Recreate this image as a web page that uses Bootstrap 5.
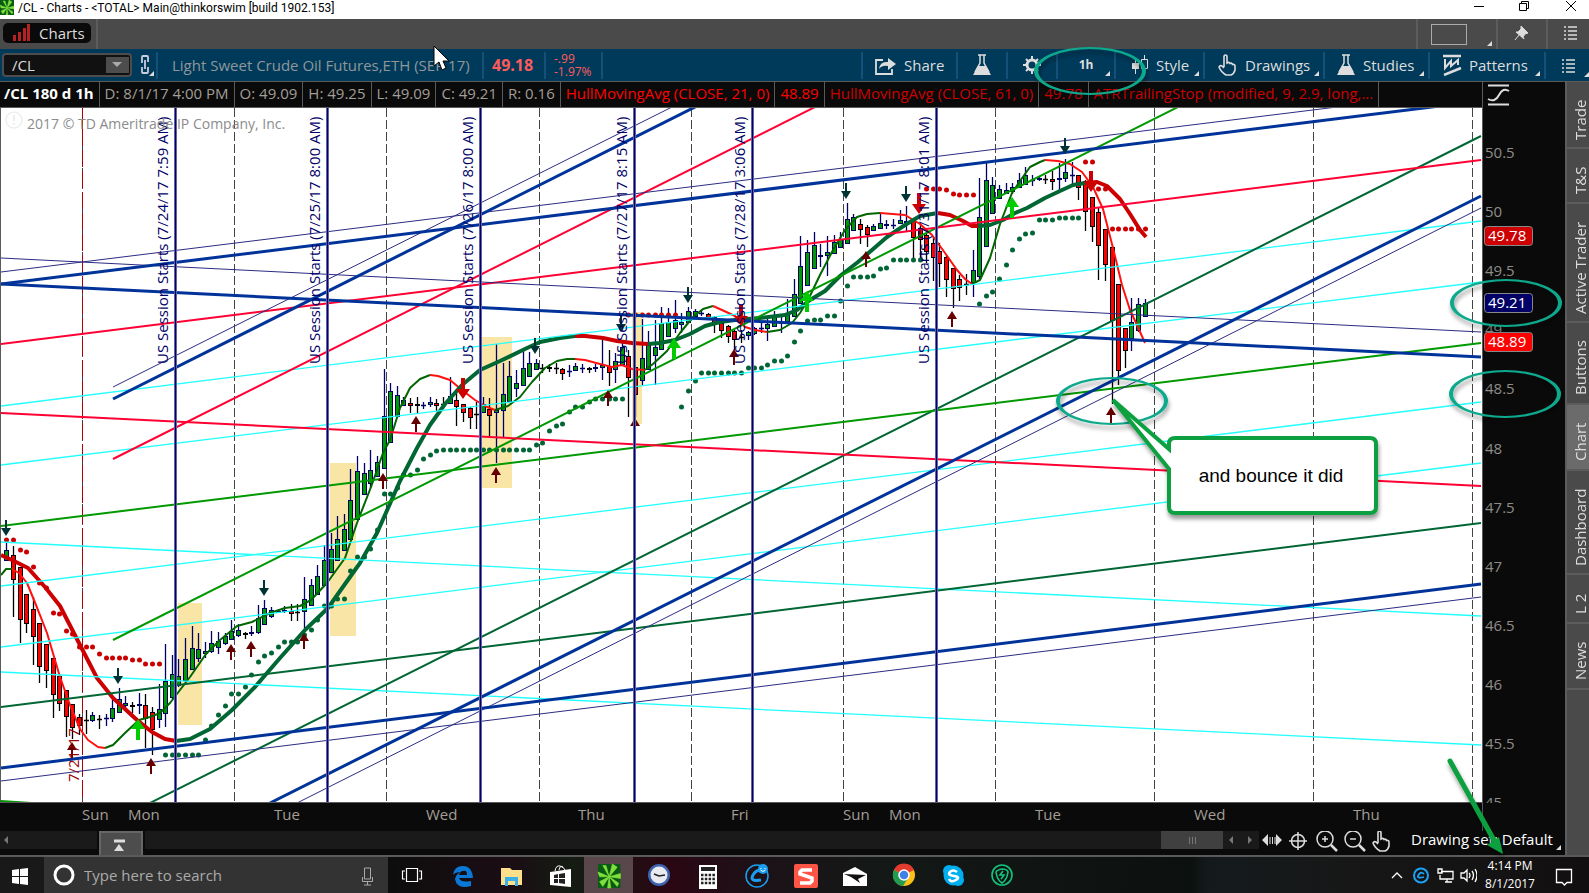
<!DOCTYPE html>
<html lang="en">
<head>
<meta charset="utf-8">
<title>/CL - Charts</title>
<meta name="viewport" content="width=device-width, initial-scale=1">
<link href="https://cdn.jsdelivr.net/npm/bootstrap@5.3.0/dist/css/bootstrap.min.css" rel="stylesheet">
<style>
body{font-family:"Open Sans","Noto Sans",sans-serif;font-size:15px;line-height:20px;background:#0a0a0a;color:#ddd;overflow:hidden}
button,input{font:inherit;color:inherit;background:none;border:0;padding:0}
svg{display:block;flex:none}
.titlebar{height:19px;background:#fff;color:#000;font-family:Roboto,sans-serif;font-size:12px;line-height:16px}
.tabstrip{height:30px;background:#4a4a4a}
.tabstrip .cell{border-left:2px solid #5c5c5c;height:30px}
.charttab{background:#0a0a0a;border-radius:5px;width:88px;height:20px;margin:4px 5px 6px 3px}
.toolbar{height:33px;background:#003a5a;border-bottom:1px solid #5a5a5a}
.toolbar .cell{border-left:2px solid #14507a;height:27px}
.cell{position:relative;white-space:nowrap;flex:none}
.corner::after{content:"";position:absolute;right:4px;bottom:3px;border-style:solid;border-width:0 0 5px 5px;border-color:transparent transparent #ddd}
.combo{width:130px;height:24px;border:2px solid #4d4d4d;border-radius:4px;background:#111;margin-left:2px}
.combo input{width:90px;height:20px}
.combo button{width:23px;height:16px;background:#4d4d4d;margin-right:1px}
.muted{color:#8f979b}
.drop{color:#ff5a5a}
.w45{width:45px}.w50{width:50px}.w58{width:58px}.w89{width:89px}.w95{width:95px}.w105{width:105px}.w116{width:116px}.w120{width:120px}
.infobar{height:26px;border-bottom:1px solid #5a5a5a;color:#a39e97}
.infobar span{border-right:1px solid #5a5a5a;padding:0 5px;height:25px;line-height:22px;white-space:nowrap}
.infobar span:first-child{padding-left:4px}
.bright{color:#f00}.deep{color:#c00}
.plot{background:#fff;border-left:1px solid #5a5a5a;border-bottom:1px solid #5a5a5a}
.timeaxis{height:28px}
.priceaxis{width:83px;border-left:1px solid #5a5a5a}
.sidetabs{width:24px;background:#4a4a4a;border-left:2px solid #5c5c5c;padding-top:1px}
.sidetabs button{writing-mode:vertical-rl;transform:rotate(180deg);border-top:2px solid #5c5c5c;width:22px;display:flex;align-items:center;justify-content:center;line-height:18px;color:#ddd;padding:0 4px 10px 0}
.h49{height:49px}.h56{height:55px}.h66{height:66px}.h82{height:82px}.h104{height:104px}.h118{height:119px}
.sidetabs .current{background:#6b6b6b}
.bottomrow{height:24px}
.track{background:#1a1a1a;height:18px}
.risebtn{width:44px;height:24px;background:#4d4d4d;border:2px solid #666;border-bottom:0;margin:0 2px}
.thumb{width:62px;background:#404040;height:18px}
.taskbar{height:38px;border-top:2px solid #5a5a5a;background:linear-gradient(90deg,#0d0d0d 24%,#1b0d14 32%,#141c12 36%,#2a0613 42%,#1c1217 48%,#141817 55%,#0c100f 75%,#141a1c 76%,#171717 85%,#120f10 100%);color:#fff}
.startbtn{width:44px;background:#191919}
.searchbox{width:344px;background:#333}
.searchbox input{width:262px}
.searchbox input::placeholder{color:#aaa;opacity:1}
.task{width:49px;height:36px}
.task.active{background:#5a474c}
.clock{font-size:12px;line-height:18px;width:66px}
.overlay{position:absolute;left:0;top:0;width:100%;height:100%;pointer-events:none}
svg text{font-family:"Open Sans","Noto Sans",sans-serif}
svg .notetext{font-family:"Liberation Sans",Arial,sans-serif}
</style>
</head>
<body class="vh-100 d-flex flex-column position-relative">
<svg width="0" height="0" class="position-absolute"><defs>
<g id="leaf"><rect width="14" height="15" fill="#0b5a14"/><path d="M7 8L3 1L5 1zM7 8L9 0L12 2zM7 8L0 5L1 8zM7 8L14 6L14 9zM7 8L1 11L3 14zM7 8L12 14L13 12zM7 8L6 15L8 15z" fill="#7fe03c" stroke="#7fe03c" stroke-width=".4"/></g>
<g id="flask"><path d="M5 1H13M7 1V9L2 18M11 1V9L16 18" fill="none" stroke="#ddd" stroke-width="1.5"/><path d="M5 12H13L18 21H0z" fill="#ddd"/></g>
<g id="hand"><path d="M6 13V3Q6 1 7.500 1T9 3V9Q11 7.500 12 9.500Q14 8.500 14.500 10.500Q17 10 17 12V16Q16 20 13 21H8Q3 18 1 13Q2 11 4 12L6 14" fill="none" stroke="#ddd" stroke-width="1.600"/></g>
<g id="list"><path d="M0 1H2M4 1H13M0 5H2M4 5H13M0 9H2M4 9H13M0 13H2M4 13H13" stroke="#ddd" stroke-width="1.600"/></g>
</defs></svg>

<header class="titlebar d-flex align-items-start flex-none">
 <svg width="14" height="15"><use href="#leaf"/></svg><span class="ps-1 flex-grow-1">/CL - Charts - &lt;TOTAL&gt; Main@thinkorswim [build 1902.153]</span>
 <button aria-label="Minimize"><svg width="46" height="14"><path d="M18 6.500H28" stroke="#000"/></svg></button>
 <button aria-label="Restore"><svg width="46" height="14"><path d="M17.500 3.500H24.500V10.500H17.500zM19.500 3V1.500H26.500V8.500H25" fill="none" stroke="#000"/></svg></button>
 <button aria-label="Close"><svg width="41" height="14"><path d="M18 1L28 11M28 1L18 11" stroke="#000"/></svg></button>
</header>

<nav class="tabstrip d-flex">
 <button class="charttab d-flex align-items-center"><svg width="36" height="20"><path d="M11.500 18V12M16.500 18V9M21.500 18V5M25.500 18V1" stroke="#b52222" stroke-width="3"/></svg><span>Charts</span></button>
 <div class="cell flex-grow-1"></div>
 <button class="cell corner" style="width:80px" aria-label="Layout"><svg width="60" height="26"><rect x="13.500" y="3.500" width="35" height="20" fill="none" stroke="#aaa"/></svg></button>
 <button class="cell w50" aria-label="Pin"><svg width="46" height="26"><path d="M23 5L30 12L27 13L25 16L26 18L18 11L20 11L23 8zM21 14L17 19" fill="#ddd" stroke="#ddd"/></svg></button>
 <button class="cell" style="width:43px" aria-label="Menu"><svg width="39" height="28"><use href="#list" x="16" y="6"/></svg></button>
</nav>

<nav class="toolbar d-flex align-items-center">
 <div class="combo d-flex align-items-center justify-content-between"><label class="visually-hidden" for="sym">Symbol</label><input id="sym" class="ps-2" value="/CL"><button aria-label="Choose symbol"><svg width="23" height="16"><path d="M6 5H16L11 10z" fill="#aaa"/></svg></button></div>
 <button aria-label="Link" style="width:24px"><svg width="24" height="24"><path d="M10 10V4Q10 3 11 3H15Q16 3 16 4V9M10 14V19Q10 20 11 20H15Q16 20 16 19V14M13 7V16" fill="none" stroke="#ccd" stroke-width="1.800"/><path d="M17 23H22V18z" fill="#ddd"/></svg></button>
 <div class="cell d-flex align-items-center muted" style="width:326px;padding-left:14px">Light Sweet Crude Oil Futures,ETH (SEP 17)</div>
 <div class="cell d-flex align-items-center drop fw-bold ps-2 fs-6" style="width:62px">49.18</div>
 <div class="cell drop ps-2" style="width:57px;font-size:12px;line-height:13px">-.99<br>-1.97%</div>
 <div class="cell flex-grow-1"></div>
 <button class="cell w95 d-flex align-items-center"><svg class="ms-2" width="33" height="22"><path d="M12 6H5V20H21V15" fill="none" stroke="#ddd" stroke-width="1.800"/><path d="M8 15Q9 7 17 8V4L25 10L17 16V12Q11 11 8 15" fill="#ddd"/></svg>Share</button>
 <button class="cell w50 d-flex justify-content-center align-items-center" aria-label="Lab"><svg width="18" height="22"><use href="#flask"/></svg></button>
 <button class="cell w50 d-flex justify-content-center align-items-center" aria-label="Settings"><svg width="20" height="20"><circle cx="10" cy="10" r="5" fill="none" stroke="#ddd" stroke-width="3"/><path d="M10 1V5M10 15V19M1 10H5M15 10H19M4 4L6 6M14 14L16 16M16 4L14 6M6 14L4 16" stroke="#ddd" stroke-width="2"/></svg></button>
 <button class="cell corner w58 fw-bold" style="font-size:12px">1h</button>
 <button class="cell corner w89 d-flex align-items-center"><svg class="ms-3" width="24" height="22"><path d="M3.500 4V20M12.500 1V18" stroke="#ddd"/><path d="M0 9H7V15H0z" fill="#ddd"/><path d="M9.500 5.500H15.500V14.500H9.500z" fill="#003a5a" stroke="#ddd"/></svg>Style</button>
 <button class="cell corner w120 d-flex align-items-center"><svg class="ms-2 ps-1" width="32" height="22"><use href="#hand" x="1"/></svg>Drawings</button>
 <button class="cell corner w105 d-flex align-items-center"><svg class="ms-2 ps-1" width="30" height="22"><use href="#flask"/></svg>Studies</button>
 <button class="cell corner w116 d-flex align-items-center"><svg class="ms-2 ps-1" width="31" height="22"><path d="M1 2H19M2 21L19 14" stroke="#ddd" stroke-width="2.500"/><path d="M3 5V14L9 7V12L16 6V11" fill="none" stroke="#ddd" stroke-width="2"/></svg>Patterns</button>
 <button class="cell w45" aria-label="Menu"><svg width="43" height="27"><use href="#list" x="16" y="7"/><path d="M38 25H43V20z" fill="#ddd"/></svg></button>
</nav>

<main class="d-flex flex-grow-1" style="min-height:0">
 <section class="d-flex flex-column flex-grow-1" style="min-width:0">
  <div class="d-flex flex-grow-1" style="min-height:0">
   <div class="d-flex flex-column flex-grow-1" style="min-width:0">
    <div class="infobar d-flex"><span class="text-white fw-bold">/CL 180 d 1h</span><span>D: 8/1/17 4:00 PM</span><span>O: 49.09</span><span>H: 49.25</span><span>L: 49.09</span><span>C: 49.21</span><span>R: 0.16</span><span class="bright">HullMovingAvg (CLOSE, 21, 0)</span><span class="bright">48.89</span><span class="deep">HullMovingAvg (CLOSE, 61, 0)</span><span class="deep">49.78</span><span class="deep">ATRTrailingStop (modified, 9, 2.9, long,...</span></div>
    <div class="plot flex-grow-1" style="min-height:0"><svg width="100%" height="100%"><g id="chart" transform="translate(-1,-108)"></g></svg></div>
    <div class="timeaxis"><svg id="times" width="100%" height="28" fill="#a39e97"></svg></div>
   </div>
   <div class="priceaxis"><svg width="100%" height="721"><g id="prices" transform="translate(-1482,-82)"></g></svg></div>
  </div>
  <div class="bottomrow d-flex">
   <div class="track" style="width:97px"><svg width="20" height="18"><path d="M8 5V13L4 9z" fill="#777"/></svg></div>
   <button class="risebtn" aria-label="Expand"><svg width="40" height="22"><path d="M13 8H24" stroke="#ddd" stroke-width="3"/><path d="M18 11L23 18H13z" fill="#ddd"/></svg></button>
   <div class="track flex-grow-1 d-flex justify-content-end"><div class="thumb"><svg width="62" height="18"><path d="M28.500 6V13M31.500 6V13M34.500 6V13" stroke="#777"/></svg></div><svg width="36" height="18"><path d="M10 5V13L6 9zM25 5V13L29 9z" fill="#777"/></svg></div>
   <svg width="148" height="24"><g fill="none" stroke="#ddd" stroke-width="1.500"><path d="M11 6V13M13.500 6V13M16 6V13" stroke-width="1"/><path d="M9 3V15L3 9zM17 3V15L23 9z" fill="#ddd" stroke="none"/><circle cx="39" cy="10" r="6.500"/><path d="M39 1V19M30 10H48"/><circle cx="66" cy="8" r="8"/><path d="M63 8H69M66 5V11"/><circle cx="94" cy="8" r="8"/><path d="M91 8H97"/><path d="M72 14L78 20M100 14L106 20" stroke-width="2.500"/></g><use href="#hand" x="113" y="-1"/></svg>
   <button class="cell corner d-flex align-items-start text-white" style="width:158px;height:22px;line-height:16px"><span class="ps-1">Drawing set: Default</span></button>
  </div>
 </section>
 <nav class="sidetabs d-flex flex-column"><button class="h66">Trade</button><button class="h56">T&amp;S</button><button class="h118">Active Trader</button><button class="h82">Buttons</button><button class="h66 current">Chart</button><button class="h104">Dashboard</button><button class="h49">L 2</button><button class="h66">News</button></nav>
</main>

<footer class="taskbar d-flex align-items-stretch">
 <button class="startbtn" aria-label="Start"><svg width="44" height="36"><path d="M12 13L19 12V19H12zM20 12L28 11V19H20zM12 20H19V27L12 26zM20 20H28V28L20 27z" fill="#fff"/></svg></button>
 <div class="searchbox d-flex align-items-center justify-content-between"><svg width="38" height="36"><circle cx="20" cy="18" r="9" fill="none" stroke="#fff" stroke-width="3"/></svg><input aria-label="Search" placeholder="Type here to search"><svg width="40" height="36"><path d="M16.500 11H22.500V22H16.500zM14.500 20V24.500H24.500V20M19.500 25V28M16 28H23" fill="none" stroke="#aaa"/></svg></div>
 <button class="task" aria-label="Task view"><svg width="49" height="36"><path d="M18.500 11.500H29.500V24.500H18.500zM17 14H14.500V22H17M31 14H33.500V22H31" fill="none" stroke="#fff" stroke-width="1.200"/></svg></button>
 <button class="task" aria-label="Edge"><svg width="49" height="36"><path d="M16 18Q17 9 26 9T36 21H22Q24 26 34 24V29Q20 33 18 22Q19 17 24 15Q18 15 16 18M22 18H30Q30 13 26 14Q23 14 22 18" fill="#0a78d6" fill-rule="evenodd"/></svg></button>
 <button class="task" aria-label="Explorer"><svg width="49" height="36"><path d="M15 11H24L26 13H36V28H15z" fill="#ffe08a"/><path d="M19 29V20H32V29H29V24H22V29z" fill="#3bb0e8"/></svg></button>
 <button class="task" aria-label="Store"><svg width="49" height="36"><path d="M15 15L36 12V30L15 28z" fill="#fff"/><path d="M20 14Q21 8 25 9T30 13M24 13Q25 8 28 10" fill="none" stroke="#fff"/><path d="M19 18L23 17V21H19zM24 17L30 16V21H24zM19 22H23V26H19zM24 22H30V27L24 26z" fill="#222"/></svg></button>
 <button class="task active" aria-label="thinkorswim"><svg width="49" height="36"><g transform="translate(14,7) scale(1.600)"><use href="#leaf"/></g></svg></button>
 <button class="task" aria-label="Clock"><svg width="49" height="36"><circle cx="26" cy="18" r="11" fill="#3d63b0"/><circle cx="26" cy="18" r="8.500" fill="#e8eaf0"/><path d="M21 17L26 19L32 18" fill="none" stroke="#222" stroke-width="1.500"/></svg></button>
 <button class="task" aria-label="Calculator"><svg width="49" height="36"><rect x="17" y="8" width="18" height="24" fill="#fff"/><path d="M19 12H33" stroke="#222" stroke-width="4"/><path d="M19 18H33M19 22H33M19 26H33" stroke="#222" stroke-width="2.500" stroke-dasharray="2.500 1.300"/></svg></button>
 <button class="task" aria-label="C app"><svg width="49" height="36"><circle cx="26" cy="19" r="11" fill="none" stroke="#1b9df0" stroke-width="1.500"/><path d="M31 15Q26 11 22 18T30 23" fill="none" stroke="#1b9df0" stroke-width="3"/><circle cx="32" cy="12" r="5" fill="#1b9df0"/><path d="M30 11V12M34 11V12M29.500 13Q32 16 34.500 13" fill="none" stroke="#fff"/></svg></button>
 <button class="task" aria-label="Snagit"><svg width="49" height="36"><rect x="14" y="7" width="24" height="24" rx="2" fill="#ff5547"/><path d="M32 13H22L20 15V17L32 21V24L30 26H20" fill="none" stroke="#fff" stroke-width="3.500"/></svg></button>
 <button class="task" aria-label="Mail"><svg width="49" height="36"><path d="M14 16L26 10L38 17V29H14z" fill="#fff"/><path d="M15 17L37 18L29 22L31 26L22 20z" fill="#111"/></svg></button>
 <button class="task" aria-label="Chrome"><svg width="49" height="36"><circle cx="26" cy="18" r="11" fill="#fbc116"/><path d="M26 18L16 13A11 11 0 0 1 36 13z" fill="#e33b2e"/><path d="M26 18L16 13A11 11 0 0 0 25 29L30 21z" fill="#229a52"/><circle cx="26" cy="18" r="5" fill="#3f7fe8" stroke="#fff" stroke-width="1.500"/></svg></button>
 <button class="task" aria-label="Skype"><svg width="49" height="36"><circle cx="22" cy="14" r="6" fill="#00aff0"/><circle cx="31" cy="23" r="6" fill="#00aff0"/><circle cx="26.500" cy="18.500" r="10" fill="#00aff0"/><path d="M30 15Q26 12 23 15T27 19T29 23T22 22" fill="none" stroke="#fff" stroke-width="2.500"/></svg></button>
 <button class="task" aria-label="Shield"><svg width="49" height="36"><g fill="none" stroke="#12c47e" stroke-width="1.600"><circle cx="26" cy="18" r="10"/><path d="M26 12Q31 12 32 15Q31 23 26 26Q21 23 20 15Q21 13 26 12M27 14L24 18H28L25 22"/></g></svg></button>
 <div class="flex-grow-1"></div>
 <svg width="94" height="36" fill="none" stroke="#fff" stroke-width="1.300"><path d="M9 21L14 16L19 21"/><circle cx="38" cy="18.500" r="7" stroke="#1ba1f3" stroke-width="2"/><path d="M41 17Q38 14 35.500 18T41 20" stroke="#1ba1f3" stroke-width="1.800"/><path d="M58 14.500H70V22H57V18M62 25H69M64 22V25M55 12H59V16H55z"/><path d="M78 16H81L84 13V24L81 21H78zM86 16Q88 18 86 21M89 14Q92 18 89 23M92 12Q96 18 92 25"/></svg>
 <div class="clock text-center">4:14 PM<br>8/1/2017</div>
 <button aria-label="Notifications"><svg width="46" height="36"><path d="M13.500 12.500H28.500V25.500H24L21.500 28L19 25.500H13.500z" fill="none" stroke="#fff" stroke-width="1.300"/></svg></button>
</footer>

<svg class="overlay">
 <defs><filter id="soft" x="-20%" y="-20%" width="140%" height="150%"><feDropShadow dx="1" dy="4" stdDeviation="2" flood-color="#000" flood-opacity=".4"/></filter></defs>
 <g id="rings" fill="#0fa98c" fill-rule="evenodd" filter="url(#soft)"></g>
 <g filter="url(#soft)"><path d="M1450 761L1495 842" stroke="#10a040" stroke-width="5" stroke-linecap="round"/><path d="M1487 845L1499 837L1503 854z" fill="#10a040"/></g>
 <path d="M1175 438H1370Q1376 438 1376 444V507Q1376 513 1370 513H1175Q1169 513 1169 507V469L1113 400L1169 449V444Q1169 438 1175 438z" fill="#fff" stroke="#10a040" stroke-width="4" filter="url(#soft)"/>
 <text class="notetext" x="1271" y="482" font-size="19" text-anchor="middle" fill="#000">and bounce it did</text>
 <path d="M434 46V66L439 62L442 70L446 68L443 61H449z" fill="#fff" stroke="#000" stroke-width="1"/>
</svg>

<script>
// Candle columns sit on a constant pitch across the plot.
const X = i => Math.round(6.3 + 6.618 * i) + .5;
const out = [];
const add = s => out.push(s);
const line = (x1,y1,x2,y2,c,w,extra='') => add(`<line x1="${x1}" y1="${y1}" x2="${x2}" y2="${y2}" stroke="${c}" stroke-width="${w}" ${extra}/>`);

[[178,603,24,122],[330,463,26,173],[482,337,30,151],[632,312,10,112]].forEach(r =>
  add(`<rect x="${r[0]}" y="${r[1]}" width="${r[2]}" height="${r[3]}" fill="#f9e6a6"/>`));
[82,234,386,539,691,843,995,1154,1313,1472].forEach(x => line(x+.5,108,x+.5,803,'#444',1,'stroke-dasharray="9 3"'));
line(82.5,108,82.5,803,'#b00000',1,'stroke-dasharray="17 4"');

// Candles: high, body top, body bottom, low, kind (g up, r down, n / b dojis)
const candles = `543 550 561 561 g|546 555 580 617 r|567 567 620 643 r|594 594 624 633 r|597 609 637 665 r|623 623 667 683 r|644 644 671 688 r|658 658 695 718 r|676 676 704 711 r|690 690 717 737 r|704 704 728 739 r|714 717 726 735 r|710 720 721 734 b|712 715 721 722 g|715 719 719 729 b|714 718 718 726 n|700 708 719 722 g|688 699 713 713 g|696 703 706 708 g|702 705 707 713 r|693 704 706 714 g|694 705 719 748 r|707 712 730 755 r|684 709 720 728 g|644 681 714 727 g|655 674 698 699 g|659 676 686 687 g|638 659 681 685 g|626 648 670 670 g|633 649 659 662 g|642 651 654 658 g|631 643 652 653 g|632 641 648 654 g|633 636 644 645 g|620 631 640 640 g|624 630 636 637 g|632 633 635 639 r|626 632 634 636 g|605 618 633 634 g|600 608 625 625 g|607 610 617 618 g|609 611 613 613 g|606 610 612 613 g|604 611 614 621 r|604 612 612 621 b|577 599 612 628 g|579 585 606 606 g|565 576 595 595 g|545 560 586 586 g|533 549 573 573 g|516 539 561 561 g|514 529 551 551 g|469 500 540 540 g|456 471 520 520 g|463 473 495 495 g|450 470 484 488 g|456 462 477 477 g|369 416 469 469 g|383 391 443 443 g|386 395 417 417 g|397 400 406 406 g|398 403 406 413 r|397 404 406 413 r|402 405 405 409 n|397 402 405 407 g|399 403 406 411 r|397 404 404 406 b|377 396 404 404 g|390 400 407 426 r|404 404 413 422 r|407 408 418 429 r|402 414 414 429 b|397 404 413 413 g|398 409 416 437 r|344 410 413 463 g|363 394 411 437 g|361 376 402 402 g|370 383 389 397 g|350 368 386 386 g|352 363 377 377 g|359 363 370 370 g|364 368 368 373 b|364 367 369 372 r|363 368 368 374 b|368 369 374 380 r|365 371 371 377 n|363 366 371 371 g|364 368 368 373 n|367 368 370 373 r|364 367 369 372 g|340 365 368 380 g|350 366 373 386 r|353 361 370 383 g|343 347 365 365 g|350 356 378 417 r|367 367 395 417 r|319 358 381 385 g|331 345 370 370 g|320 347 356 385 g|307 323 350 350 g|308 322 337 337 g|300 320 329 333 g|313 322 325 333 g|307 311 323 323 g|309 311 317 317 g|310 313 313 316 n|313 314 318 320 r|316 317 323 333 r|322 323 331 338 r|325 326 337 343 r|330 331 340 350 r|330 337 337 343 b|331 332 336 340 g|327 328 334 335 g|323 328 328 333 n|317 324 329 341 g|311 317 327 327 g|317 322 322 333 n|299 313 322 322 g|279 294 317 317 g|236 266 304 304 g|240 252 286 286 g|232 245 269 269 g|244 255 257 267 g|236 252 256 276 g|235 242 254 254 g|232 239 248 248 g|203 219 244 244 g|214 217 231 231 g|219 224 230 244 r|225 227 235 247 r|224 226 231 231 g|213 223 229 229 g|220 224 226 229 g|219 225 225 229 n|210 220 224 224 g|206 221 223 231 g|218 220 238 258 r|223 228 240 258 r|233 235 252 263 r|237 243 258 281 r|243 251 264 287 r|256 257 280 297 r|268 268 289 308 r|275 279 288 301 r|274 284 284 295 b|250 270 283 297 g|178 217 277 279 g|163 180 247 247 g|177 185 214 214 g|185 189 199 199 g|183 190 194 194 g|183 187 192 194 g|173 180 188 188 g|167 175 185 185 g|175 180 180 186 n|176 178 180 181 g|175 179 179 184 b|171 179 182 190 r|163 178 180 190 g|159 172 179 182 g|162 175 175 184 n|175 175 188 200 r|180 181 212 231 r|197 197 227 242 r|208 212 246 280 r|229 229 265 281 r|246 247 321 404 r|284 284 371 385 r|328 328 351 368 r|298 322 339 351 g|298 304 331 332 g|299 303 317 317 g`.split('|');
candles.forEach((c,i) => {
  const [hi,top,bot,lo,k] = c.split(' '), x = X(i), ink = (k==='g'||k==='n') ? '#000066' : '#000';
  line(x,hi,x,lo,ink,1.3);
  if (k==='g'||k==='r') add(`<rect x="${x-2}" y="${+top+.5}" width="4" height="${Math.max(bot-top-1,1)}" fill="${k==='g'?'#009900':'#ff0000'}" stroke="${ink}"/>`);
  else line(x-2.5,+top+.5,x+2.5,+top+.5,ink,1.5);
});

// Trailing stop dots: first column, then one y per column ("y*n" repeats)
[['#cc0000',0,'540*2 550 552 567 583 588 613 614 631 634 647*3 654 658*4 660*2 664*3'],
 ['#006633',24,'755*6 740 726 715 706 694*2 687 675 662 656 653 647 642*3 635 630 620 606*2 599*2 571 557*2 549 530 494*2 488 475*2 470 459 455 451 450*14 445 443 431 426 424 412 407*2 402 399*5'],
 ['#cc0000',94,'315*8'],
 ['#006633',102,'407 391 381 373*7 368*3 365 361*2 356 342 331 321 320*2 316*2 301 286 277*3 276 269 268 260*5'],
 ['#cc0000',139,'189*3 190 194 195*3'],
 ['#006633',147,'304 296 292 279 265 250 239 234 233 220*3 218*4'],
 ['#cc0000',163,'162*2 189*2 229*6']].forEach(([c,i,s]) => s.split(' ').forEach(t => {
   let [y,n=1] = t.split('*');
   for (; n>0; n--) add(`<circle cx="${X(i++)}" cy="${y}" r="2.5" fill="${c}"/>`);
 }));

const poly = (c,w,p) => add(`<polyline points="${p}" fill="none" stroke="${c}" stroke-width="${w}" stroke-linejoin="round"/>`);
const G='#006600', R='#ff1111';
poly(G,2,'1,575 6,569 12,569');
poly(R,2,'12,569 19,573 27,583 36,605 47,633 60,677 70,705 80,729 88,740 98,747 105,748');
poly(G,2,'105,748 113,745 125,733 139,720 150,717 160,713 170,703 180,690 190,677 206,654 220,640 237,626 252,622 270,613 285,608 300,606 311,600 327,583 345,558 357,523 371,487 383,453 390,440 400,408 410,388 420,379 430,375');
poly(R,2,'430,375 438,376 450,380 462,390 475,400 487,407 495,410');
poly(G,2,'495,410 508,406 520,397 532,382 545,368 557,361 567,359 575,359');
poly(R,2,'575,359 585,360 600,364 612,367 622,365 632,369 645,370');
poly(G,2,'645,370 653,364 667,351 680,333 693,317 703,309 713,306');
poly(R,2,'713,306 722,310 735,316 745,327 755,330 767,332');
poly(G,2,'767,332 780,330 792,323 800,313 808,300 820,275 833,250 845,230 857,217 867,214 880,213');
poly(R,2,'880,213 905,215 920,224 932,235 945,253 957,270 965,279 972,284');
poly(G,2,'972,284 980,280 990,258 1000,224 1012,193 1020,181 1030,167 1040,162 1045,160');
poly(R,2,'1045,160 1058,161 1070,164 1082,172 1093,187 1103,209 1113,248 1122,285 1130,310 1137,325 1145,343');
const S='#006633', D='#cc0000';
poly(D,4,'1,555 12,560 28,568 45,587 60,606 80,645 97,678 113,698 137,720 152,732 165,739 176,741');
poly(S,4,'176,741 190,739 210,729 232,710 255,687 280,658 305,630 328,608 345,584 360,563 377,533 400,481 417,448 430,425 445,404 462,385 480,370 500,361 525,349 540,342 560,338 575,336');
poly(D,4,'575,336 585,336 603,338 617,341 632,343 648,344');
poly(S,4,'648,344 660,343 675,340 690,334 705,326 720,322 735,320 760,318 785,315 797,310 810,300 825,291 840,276 858,262 872,250 887,237 905,225 920,216 938,213');
poly(D,4,'938,213 950,215 963,221 972,226 978,226');
poly(S,4,'978,226 990,225 1003,220 1015,213 1027,208 1045,198 1060,191 1073,185 1085,183');
poly(D,4,'1085,183 1097,182 1107,186 1120,199 1130,214 1140,230 1146,237');

// Trend lines and channels
[[1,542,1481,616],[1,586,1481,402],[1,647,1481,463],[1,672,1481,745],[1,406,1481,221],[1,465,1481,282]].forEach(l => line(...l,'#22ffff',1.3));
[[1,707,1481,523],[150,803,1481,136]].forEach(l => line(...l,'#006633',2));
[[113,640,1178,107],[1,526,1481,343],[1,801,31,803]].forEach(l => line(...l,'#009900',2));
[[1,344,1481,160],[113,459,815,107],[1,413,1481,486]].forEach(l => line(...l,'#ff0033',2));
[[1,272,1337,107],[1,258,1481,332],[113,387,672,107],[297,803,1481,208],[1,781,1481,597]].forEach(l => line(...l,'#2c2c85',1));
[[1,284,1440,106],[1,284,1481,357],[113,399,697,106],[270,803,1481,196],[1,768,1481,584]].forEach(l => line(...l,'#003399',3));

[[6,520],[118,668],[264,580],[535,338],[621,316],[688,287],[846,183],[906,186],[1065,138]].forEach(([x,y]) => add(`<path d="M${x-1} ${y}h2v8h4l-5 8l-5 -8h4z" fill="#003333"/>`));
[[72,742],[151,758],[231,644],[251,641],[304,633],[383,473],[416,416],[496,467],[608,390],[635,418],[734,349],[866,251],[952,311],[1111,407]].forEach(([x,y]) => add(`<path d="M${x} ${y}l5 8h-4v8h-2v-8h-4z" fill="#660000"/>`));
[[138,719],[674,338],[807,291],[1012,197]].forEach(([x,y]) => add(`<path d="M${x} ${y}l7 10h-5v11h-4v-11h-5z" fill="#00cc00"/>`));
[[463,378],[741,305],[919,193],[1091,171]].forEach(([x,y]) => add(`<path d="M${x-2} ${y}h4v11h5l-7 10l-7 -10h5z" fill="#cc0000"/>`));

[[175,'7/24/17 7:59'],[327,'7/25/17 8:00'],[480,'7/26/17 8:00'],[634,'7/27/17 8:15'],[752,'7/28/17 3:06'],[936,'7/31/17 8:01']].forEach(([x,t]) => {
  line(x+.5,108,x+.5,803,'#7a7ab4',3); line(x+.5,108,x+.5,803,'#000066',1.4);
  add(`<text transform="translate(${x-7},364) rotate(-90)" font-size="15" fill="#000066">US Session Starts (${t} AM)</text>`);
});
add(`<text transform="translate(79,782) rotate(-90)" font-size="15" fill="#990000">7/21/17</text>`);
add(`<circle cx="14" cy="120" r="8" fill="none" stroke="#eee" stroke-width="1.5"/><path d="M14 115v6m0 2v2" stroke="#eee" stroke-width="2"/>`);
add(`<text x="27" y="129" font-size="14" fill="#8c8c8c">2017 © TD Ameritrade IP Company, Inc.</text>`);
document.getElementById('chart').innerHTML = out.join('');

document.getElementById('times').innerHTML = [['Sun',82],['Mon',128],['Tue',274],['Wed',426],['Thu',578],['Fri',731],['Sun',843],['Mon',889],['Tue',1035],['Wed',1194],['Thu',1353]]
  .map(([t,x]) => `<text x="${x}" y="17" font-size="15">${t}</text>`).join('');

let p = '<path d="M1487 85.500H1508M1487 104.500H1508M1487 99Q1494 103 1498 95T1508 91" fill="none" stroke="#ddd" stroke-width="2"/>';
for (let k = 0; k < 12; k++) p += `<text x="1484" y="${Math.round(158 + 59.1*k)}" font-size="15" fill="#8f8c88">${50.5 - k/2}</text>`;
[[226,'49.78','#cc0000'],[293,'49.21','#000066'],[332,'48.89','#ff0000']].forEach(([y,t,c]) =>
  p += `<rect x="1483.500" y="${y+.5}" width="48" height="19" rx="3" fill="${c}" stroke="#888"/><text x="1487" y="${y+15}" font-size="15" fill="#fff">${t}</text>`);
document.getElementById('prices').innerHTML = p;

// Pen rings: heavier at the sides, thin along top and bottom
document.getElementById('rings').innerHTML = [[1090,71],[1112,401],[1506,303],[1505,394]].map(([x,y]) =>
  `<path d="M${x-56} ${y}a56 24 0 1 0 112 0a56 24 0 1 0 -112 0zM${x-52} ${y}a52 22 0 1 0 104 0a52 22 0 1 0 -104 0z"/>`).join('');
</script>
<script src="https://cdn.jsdelivr.net/npm/bootstrap@5.3.0/dist/js/bootstrap.bundle.min.js"></script>
</body>
</html>
